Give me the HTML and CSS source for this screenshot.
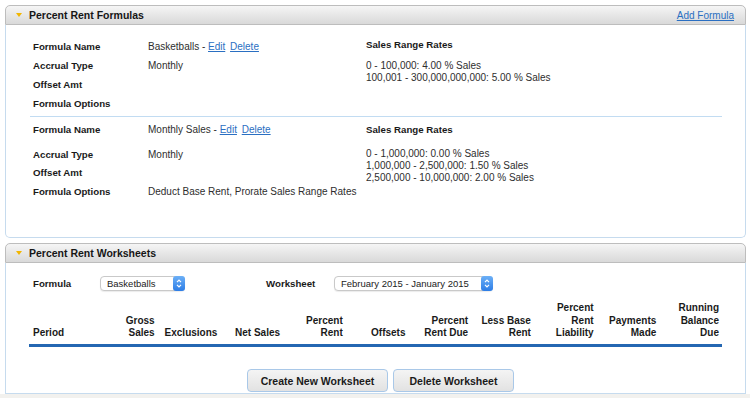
FILE: index.html
```html
<!DOCTYPE html>
<html lang="en">

<head>
    <meta charset="UTF-8">
    <meta name="viewport" content="width=device-width, initial-scale=1.0">
    <title>Percent Rent</title>
    <link rel="stylesheet" href="styles.css">
</head>

<body>
    <div class="page">
        <!-- Formulas -->
        <section class="panel">
            <div class="panel-head">
                <span class="caret"></span>
                <h2>Percent Rent Formulas</h2>
                <a href="#" class="head-link">Add Formula</a>
            </div>
            <div class="panel-body formulas">
                <div class="formula">
                    <div class="label">Formula Name</div>
                    <div class="value">Basketballs - <a href="#">Edit</a> <a href="#" class="del">Delete</a></div>
                    <div class="rates-title">Sales Range Rates</div>
                    <div class="label">Accrual Type</div>
                    <div class="value">Monthly</div>
                    <div class="rates">
                        0 - 100,000: 4.00 % Sales<br>
                        100,001 - 300,000,000,000: 5.00 % Sales
                    </div>
                    <div class="label">Offset Amt</div>
                    <div class="value"></div>
                    <div class="label">Formula Options</div>
                    <div class="value"></div>
                </div>

                <div class="formula second">
                    <div class="label">Formula Name</div>
                    <div class="value">Monthly Sales - <a href="#">Edit</a> <a href="#" class="del">Delete</a></div>
                    <div class="rates-title">Sales Range Rates</div>
                    <div class="label">Accrual Type</div>
                    <div class="value">Monthly</div>
                    <div class="rates">
                        0 - 1,000,000: 0.00 % Sales<br>
                        1,000,000 - 2,500,000: 1.50 % Sales<br>
                        2,500,000 - 10,000,000: 2.00 % Sales
                    </div>
                    <div class="label">Offset Amt</div>
                    <div class="value"></div>
                    <div class="label">Formula Options</div>
                    <div class="value">Deduct Base Rent, Prorate Sales Range Rates</div>
                </div>
            </div>
        </section>

        <!-- Worksheets -->
        <section class="panel">
            <div class="panel-head">
                <span class="caret"></span>
                <h2>Percent Rent Worksheets</h2>
            </div>
            <div class="panel-body worksheets">
                <div class="filters">
                    <div class="field">
                        <span class="field-label">Formula</span>
                        <div class="select small">
                            <span>Basketballs</span>
                            <span class="stepper">
                                <svg width="12" height="15" viewBox="0 0 12 15">
                                    <path d="M4 6.2 L6 4.2 L8 6.2 M4 8.8 L6 10.8 L8 8.8" fill="none" stroke="#fff" stroke-width="1.2" />
                                </svg>
                            </span>
                        </div>
                    </div>
                    <div class="field">
                        <span class="field-label">Worksheet</span>
                        <div class="select wide">
                            <span>February 2015 - January 2015</span>
                            <span class="stepper">
                                <svg width="12" height="15" viewBox="0 0 12 15">
                                    <path d="M4 6.2 L6 4.2 L8 6.2 M4 8.8 L6 10.8 L8 8.8" fill="none" stroke="#fff" stroke-width="1.2" />
                                </svg>
                            </span>
                        </div>
                    </div>
                </div>

                <div class="sheet-head">
                    <div class="col-period">Period</div>
                    <div>Gross<br>Sales</div>
                    <div>Exclusions</div>
                    <div>Net Sales</div>
                    <div>Percent<br>Rent</div>
                    <div>Offsets</div>
                    <div>Percent<br>Rent Due</div>
                    <div>Less Base<br>Rent</div>
                    <div>Percent<br>Rent<br>Liability</div>
                    <div>Payments<br>Made</div>
                    <div>Running<br>Balance<br>Due</div>
                </div>

                <div class="actions">
                    <button class="btn btn-create">Create New Worksheet</button>
                    <button class="btn btn-delete">Delete Worksheet</button>
                </div>
            </div>
        </section>
    </div>
    <div class="footer-strip"></div>
</body>

</html>
```

FILE: styles.css
```css
* {
    margin: 0;
    padding: 0;
    box-sizing: border-box;
}

body {
    font-family: 'Liberation Sans', Arial, Helvetica, sans-serif;
    font-size: 10px;
    color: #2e2e2e;
    background: white;
    overflow: hidden;
}

a {
    color: #2a6fc2;
    text-decoration: underline;
}

.page {
    padding: 5px 4px 0 5px;
}

.panel + .panel {
    margin-top: 5px;
}

/* Cabecera gris */
.panel-head {
    height: 20px;
    display: flex;
    align-items: center;
    padding: 0 11px 0 10px;
    border: 1px solid #bdbdbd;
    border-radius: 5px 5px 0 0;
    background: linear-gradient(#f5f5f5, #d9d9d9);
}

.caret {
    width: 0;
    height: 0;
    border-left: 3px solid transparent;
    border-right: 3px solid transparent;
    border-top: 4px solid #f2b600;
    margin-right: 7px;
}

.panel-head h2 {
    flex: 1;
    font-size: 10.5px;
    font-weight: bold;
    color: #161616;
}

.head-link {
    font-size: 10px;
}

.panel-body {
    border: 1px solid #c6dbee;
    border-top: none;
}

/* Formulas */
.formulas {
    height: 213px;
    padding: 12px 23px 0 24px;
    border-radius: 0 0 5px 5px;
}

.formula {
    display: grid;
    grid-template-columns: 118px 218px 1fr;
    grid-template-rows: repeat(4, 19px);
    padding-bottom: 3px;
}

.formula.second {
    grid-template-rows: 25px 18.5px 18.5px 18.5px;
    border-top: 1px solid #c2dcf2;
    padding-top: 2.5px;
}

.label,
.value,
.rates-title {
    line-height: 19px;
    white-space: nowrap;
}

.label {
    grid-column: 1;
    padding-left: 3px;
    font-size: 9.7px;
    font-weight: bold;
    color: #1a1a1a;
}

.value {
    grid-column: 2;
}

.value .del {
    margin-left: 2px;
}

.rates-title {
    grid-column: 3;
    font-size: 9.7px;
    font-weight: bold;
    color: #1a1a1a;
}

.formula:first-child .rates-title {
    line-height: 15px;
}

.rates {
    grid-column: 3;
    grid-row: 2 / span 3;
    padding-top: 3.5px;
    line-height: 12px;
}

/* Worksheets */
.worksheets {
    height: 131px;
    padding: 13px 23px 0 23px;
}

.filters {
    display: flex;
    align-items: center;
    gap: 81px;
    padding-left: 4px;
}

.field {
    display: flex;
    align-items: center;
}

.field-label {
    width: 67px;
    line-height: 15px;
    font-size: 9.7px;
    font-weight: bold;
    color: #1a1a1a;
}

.field + .field .field-label {
    width: 68px;
}

.select {
    height: 15px;
    display: flex;
    align-items: center;
    justify-content: space-between;
    padding-left: 6px;
    border: 1px solid #c9c9c9;
    border-radius: 4px;
    background: white;
    box-shadow: 0 1px 1px rgba(0, 0, 0, 0.08);
    font-size: 9.5px;
    color: #222;
}

.select.small {
    width: 85px;
}

.select.wide {
    width: 159px;
}

.stepper {
    display: flex;
    width: 12px;
    height: 15px;
    margin-right: -1px;
    border-radius: 3px;
    background: linear-gradient(#6cb0f7, #2d7de6);
}

.sheet-head {
    display: grid;
    grid-template-columns: 66px repeat(10, 1fr);
    align-items: end;
    margin-top: 11px;
    padding-bottom: 4px;
    border-bottom: 3px solid #2467b2;
    font-size: 10px;
    font-weight: bold;
    line-height: 12.5px;
    color: #1a1a1a;
}

.sheet-head div {
    text-align: right;
    padding-right: 3px;
}

.sheet-head .col-period {
    text-align: left;
    padding-left: 4px;
}

.actions {
    display: flex;
    justify-content: center;
    gap: 5px;
    margin-top: 22.5px;
    padding-left: 10px;
}

.btn {
    height: 23px;
    border: 1px solid #a9c8e8;
    border-radius: 4px;
    background: linear-gradient(#f4f4f4, #e2e2e2);
    font-family: 'Liberation Sans', Arial, Helvetica, sans-serif;
    font-size: 10.5px;
    font-weight: bold;
    color: #1a1a1a;
    cursor: pointer;
}

.btn-create {
    width: 141px;
}

.btn-delete {
    width: 121px;
}

.footer-strip {
    height: 4px;
    background: #f2f1ee;
}
```
